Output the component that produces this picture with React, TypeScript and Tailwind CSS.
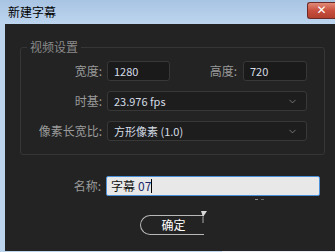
import { ChevronDown } from 'lucide-react';

const font = { fontFamily: '"Noto Sans CJK SC", "Noto Sans", sans-serif' };

function Field({ value, className = '' }: { value: string; className?: string }) {
  return (
    <div className={`h-[20px] flex items-center px-[6px] bg-[#1a1a1a] border border-[#383838] rounded-[3px] text-[11px] text-[#d4dce6] ${className}`}>
      {value}
    </div>
  );
}

function Select({ value }: { value: string }) {
  return (
    <div className="h-[20px] w-[200px] flex items-center justify-between pl-[6px] pr-[8px] bg-[#1d1d1d] border border-[#383838] rounded-[3px] text-[11px] text-[#d4dce6]">
      <span>{value}</span>
      <ChevronDown size={11} strokeWidth={1.5} className="text-[#9a9a9a]" />
    </div>
  );
}

export default function App() {
  return (
    <div className="w-[335px] h-[252px] overflow-hidden bg-[#bcd4ec] flex flex-col" style={font}>
      {/* title bar */}
      <div className="h-[24px] shrink-0 flex items-center justify-between pl-[8px] bg-gradient-to-b from-[#a8c4e3] to-[#bdd5ee]">
        <span className="text-[12px] text-black leading-none">新建字幕</span>
        <div className="mt-[-4px] w-[28px] h-[17px] rounded-l-[3px] border border-[#6b2a28] border-r-0 bg-gradient-to-b from-[#e08a78] via-[#c9503e] to-[#b3402e] flex items-center justify-center">
          <span className="text-white text-[12px] font-bold leading-none" style={{ fontFamily: 'Verdana, "DejaVu Sans", sans-serif' }}>✕</span>
        </div>
      </div>

      {/* body */}
      <div className="ml-[5px] h-[227px] bg-[#232323] pt-[17px] pl-[15px] pr-[10px] relative">
        <fieldset className="border border-[#363636] rounded-[3px] px-[0px] pb-[13px] h-[114px]">
          <legend className="ml-[6px] px-[3px] text-[12px] text-[#8a8a8a] leading-none">视频设置</legend>
          <div className="flex flex-col gap-[10px] mt-[8px]">
            <div className="flex items-center">
              <span className="w-[86px] text-right pr-[5px] text-[12px] text-[#9a9a9a]">宽度:</span>
              <Field value="1280" className="w-[63px]" />
              <span className="w-[73px] text-right pr-[6px] text-[12px] text-[#9a9a9a]">高度:</span>
              <Field value="720" className="w-[64px]" />
            </div>
            <div className="flex items-center">
              <span className="w-[86px] text-right pr-[5px] text-[12px] text-[#9a9a9a]">时基:</span>
              <Select value="23.976 fps" />
            </div>
            <div className="flex items-center">
              <span className="w-[86px] text-right pr-[5px] text-[12px] text-[#9a9a9a]">像素长宽比:</span>
              <Select value="方形像素 (1.0)" />
            </div>
          </div>
        </fieldset>

        <div className="flex items-center mt-[21px]">
          <span className="w-[86px] text-right pr-[5px] text-[12px] text-[#9a9a9a]">名称:</span>
          <div className="w-[214px] h-[20px] flex items-center px-[4px] bg-[#e8e8e8] border border-[#4a90d9] rounded-[2px] text-[12px] text-[#111]">
            字幕 <span className="ml-[3px] text-[#1a2a6a]">07</span>
            <span className="w-[1px] h-[14px] bg-black" />
          </div>
        </div>
        <div className="flex gap-[3px] ml-[235px] mt-[3px]">
          <span className="w-[3px] h-[1px] bg-[#888]" />
          <span className="w-[3px] h-[1px] bg-[#666]" />
        </div>

        <div className="flex justify-center ml-[-2px] mt-[15px]">
          <div className="relative">
            <div className="w-[64px] h-[20px] flex items-center justify-center rounded-l-full border border-r-0 border-[#b8b8b8] text-[12px] text-white pl-[3px]">
              确定
            </div>
            <svg className="absolute right-[-3px] top-[-4px]" width="6" height="14" viewBox="0 0 6 14">
              <path d="M0 0 L6 0 L2 6 Z" fill="#d8d8d8" />
              <path d="M2 6 L2 12" stroke="#aaa" strokeWidth="1" />
            </svg>
          </div>
        </div>
      </div>

      <div className="flex h-[1px]">
        <div className="w-[222px] bg-[#bcd4ec]" />
        <div className="flex-1 bg-[#e8eef4]" />
      </div>
    </div>
  );
}
